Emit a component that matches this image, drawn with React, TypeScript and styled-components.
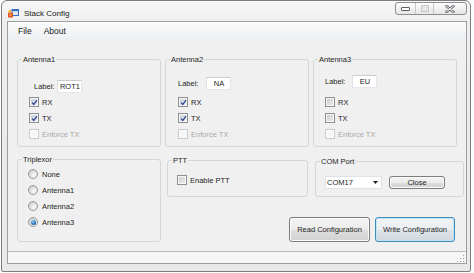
import React from "react";
import styled, { createGlobalStyle } from "styled-components";

const Global = createGlobalStyle`
  html, body { margin: 0; padding: 0; background: #ffffff; }
  body { font-family: "Liberation Sans", Arial, sans-serif; }
  * { box-sizing: border-box; }
`;

const FONT = `"Liberation Sans", Arial, sans-serif`;

const Window = styled.div`
  margin-left: 1px;
  width: 470px;
  height: 272px;
  border: 1px solid #7b7d80;
  border-radius: 6px 6px 2px 2px;
  padding: 0 3px 7px 5px;
  background: linear-gradient(#f7f7f7, #eeeeee 22px, #e9e9e9);
  display: flex;
  flex-direction: column;
`;

const TitleBar = styled.div`
  height: 20px;
  flex-shrink: 0;
  display: flex;
  align-items: flex-start;
`;

const Caption = styled.div`
  display: flex;
  align-items: center;
  gap: 5px;
  height: 14px;
  margin-top: 5px;
  padding-left: 1px;
  font-size: 8px;
  color: #1a1a1a;
`;

const CaptionButtons = styled.div`
  margin-left: auto;
  margin-top: 1px;
  display: flex;
  height: 13px;
  border: 1px solid #8c8e91;
  border-radius: 3px;
  background: linear-gradient(#fefefe, #f1f1f1 50%, #e6e6e6);
  overflow: hidden;
`;

const CaptionButton = styled.div<{ $w: number; $last?: boolean }>`
  width: ${(p) => p.$w}px;
  display: flex;
  align-items: center;
  justify-content: center;
  border-right: ${(p) => (p.$last ? "none" : "1px solid #c4c6c9")};
`;

const Client = styled.div`
  flex: 1;
  border: 1px solid #9b9ea2;
  background: #f0f0f0;
  display: flex;
  flex-direction: column;
`;

const MenuBar = styled.div`
  height: 18px;
  flex-shrink: 0;
  display: flex;
  align-items: center;
  padding-left: 4px;
  background: linear-gradient(#fcfcfd, #f3f4f6 60%, #eceef1);
  font-size: 8.5px;
  color: #1a1a1a;
`;

const MenuItem = styled.span`
  padding: 0 6px;
`;

const Content = styled.div`
  height: 211px;
  flex-shrink: 0;
  display: flex;
  flex-direction: column;
`;

const TopRow = styled.div`
  display: flex;
  gap: 4px;
  padding-left: 9px;
  margin-top: 13px;
`;

const BottomArea = styled.div`
  display: flex;
  align-items: flex-start;
  margin-top: 6px;
  padding-left: 9px;
`;

const RightColumn = styled.div`
  display: flex;
  flex-direction: column;
  margin-left: 6px;
  width: 297px;
`;

const FieldRow = styled.div`
  display: flex;
  align-items: flex-start;
`;

const GroupBox = styled.fieldset<{ $w: number; $h: number; $mt?: number; $ml?: number }>`
  margin: ${(p) => p.$mt ?? 0}px 0 0 ${(p) => p.$ml ?? 0}px;
  width: ${(p) => p.$w}px;
  height: ${(p) => p.$h}px;
  min-width: 0;
  border: 1px solid #d2d7db;
  border-radius: 3px;
  padding: 0 0 0 4px;
`;

const Legend = styled.legend`
  padding: 0 1px;
  font-size: 7.5px;
  line-height: 13px;
  color: #1e1e1e;
`;

const Body = styled.div<{ $pad: number; $top?: number }>`
  padding-left: ${(p) => p.$pad}px;
  padding-top: ${(p) => p.$top ?? 0}px;
  display: flex;
  flex-direction: column;
`;

const LabelArea = styled.div<{ $top: number; $indent: number; $gap: number }>`
  height: 28px;
  padding-top: ${(p) => p.$top}px;
  padding-left: ${(p) => p.$indent}px;
  display: flex;
  align-items: flex-start;
  gap: ${(p) => p.$gap}px;
`;

const LabelText = styled.span`
  font-size: 7.5px;
  line-height: 13px;
  color: #1e1e1e;
`;

const TextBox = styled.input`
  width: 25px;
  height: 13px;
  padding: 0;
  margin: 0;
  border: 1px solid;
  border-color: #c9ccd2 #e3e6ea #e3e6ea #dde0e4;
  background: #ffffff;
  font-family: ${FONT};
  font-size: 7.5px;
  color: #1e1e1e;
  text-align: center;
  outline: none;
`;

const OptionRow = styled.div<{ $disabled?: boolean; $gap: number }>`
  height: 16px;
  display: flex;
  align-items: center;
  gap: ${(p) => p.$gap}px;
  font-size: 7.5px;
  color: ${(p) => (p.$disabled ? "#a9a9a9" : "#1e1e1e")};
`;

const CheckBox = styled.span<{ $checked?: boolean; $disabled?: boolean }>`
  width: 10px;
  height: 10px;
  flex-shrink: 0;
  border: 1px solid ${(p) => (p.$disabled ? "#c9c9c9" : "#8e8f8f")};
  background: ${(p) =>
    p.$disabled
      ? "#f6f6f6"
      : p.$checked
      ? "linear-gradient(135deg, #c4cbd8, #eef1f6)"
      : "linear-gradient(135deg, #c9c9c9, #f0f0f0)"};
  box-shadow: inset 0 0 0 1px ${(p) => (p.$disabled ? "#fcfcfc" : "#f7f7f7")};
  display: flex;
  align-items: center;
  justify-content: center;
`;

const RadioCircle = styled.span`
  width: 10px;
  height: 10px;
  flex-shrink: 0;
  border-radius: 50%;
  border: 1px solid #9a9a9a;
  background: radial-gradient(circle at 62% 68%, #fafafa 0%, #e4e4e4 45%, #c4c4c4 100%);
  display: flex;
  align-items: center;
  justify-content: center;
`;

const RadioDot = styled.span`
  width: 5px;
  height: 5px;
  border-radius: 50%;
  background: radial-gradient(circle at 40% 35%, #9ad8f8 0%, #2a74bd 55%, #0f3e78 100%);
`;

const ComboBox = styled.div`
  width: 57px;
  height: 13px;
  background: #ffffff;
  border: 1px solid #dfe2e6;
  display: flex;
  align-items: center;
  justify-content: space-between;
  padding: 0 3px 0 1px;
  font-size: 7.5px;
  color: #1e1e1e;
`;

const ComRow = styled.div`
  display: flex;
  align-items: center;
  gap: 7px;
`;

const PushButton = styled.button<{ $w: number; $h: number; $default?: boolean }>`
  width: ${(p) => p.$w}px;
  height: ${(p) => p.$h}px;
  padding: 0;
  margin: 0;
  font-family: ${FONT};
  font-size: 7.5px;
  color: #1e1e1e;
  border: 1px solid ${(p) => (p.$default ? "#3f8cbd" : "#7d7d7d")};
  border-radius: 3px;
  background: ${(p) =>
    p.$default
      ? "linear-gradient(#f1f4f6 0%, #eaeef1 50%, #dde3e7 51%, #d2d9de 100%)"
      : "linear-gradient(#f3f3f3 0%, #ececec 50%, #dedede 51%, #d1d1d1 100%)"};
  box-shadow: inset 0 0 0 1px ${(p) => (p.$default ? "#bfe4f6" : "#fbfbfb")};
`;

const ButtonRow = styled.div`
  display: flex;
  justify-content: flex-end;
  gap: 5px;
  padding-right: 9px;
  margin-top: 20px;
`;

const StatusStrip = styled.div`
  flex: 1;
  border-top: 1px solid #b9bbbe;
  background: #f6f6f6;
  display: flex;
  justify-content: flex-end;
  align-items: flex-end;
  padding: 0 1px 0 0;
`;

function CheckMark() {
  return (
    <svg width="7" height="7" viewBox="0 0 7 7">
      <path d="M1 3.6 L2.8 5.5 L6 1.2" fill="none" stroke="#30468f" strokeWidth="1.3" />
    </svg>
  );
}

function Check({ label, checked, disabled }: { label: string; checked?: boolean; disabled?: boolean }) {
  return (
    <OptionRow $disabled={disabled} $gap={3}>
      <CheckBox $checked={checked} $disabled={disabled}>
        {checked && <CheckMark />}
      </CheckBox>
      {label}
    </OptionRow>
  );
}

function Radio({ label, on }: { label: string; on?: boolean }) {
  return (
    <OptionRow $gap={4}>
      <RadioCircle>{on && <RadioDot />}</RadioCircle>
      {label}
    </OptionRow>
  );
}

function AppIcon() {
  return (
    <svg width="11" height="9" viewBox="0 0 11 9">
      <rect x="4" y="0.5" width="6.5" height="6" fill="#dfe9f7" stroke="#3a6cc0" strokeWidth="1" />
      <rect x="4" y="0.5" width="6.5" height="1.6" fill="#3a6cc0" />
      <rect x="0" y="3.5" width="5" height="5" fill="#e2542a" />
      <rect x="0.5" y="1" width="2.6" height="2.5" fill="#f2bb3a" />
      <rect x="1.2" y="4.6" width="2.4" height="2.4" fill="#f58b4a" />
    </svg>
  );
}

function Grip() {
  const dots = [
    [6, 0],
    [6, 3],
    [3, 3],
    [6, 6],
    [3, 6],
    [0, 6],
  ];
  return (
    <svg width="8" height="8" viewBox="0 0 8 8">
      {dots.map(([x, y], i) => (
        <g key={i}>
          <rect x={x + 0.6} y={y + 0.6} width="1.2" height="1.2" fill="#ffffff" />
          <rect x={x} y={y} width="1.2" height="1.2" fill="#a3a6aa" />
        </g>
      ))}
    </svg>
  );
}

const antennas = [
  { name: "Antenna1", label: "ROT1", rx: true, tx: true, pad: 7, indent: 5, gap: 3, top: 14 },
  { name: "Antenna2", label: "NA", rx: true, tx: true, pad: 8, indent: 0, gap: 8, top: 11 },
  { name: "Antenna3", label: "EU", rx: false, tx: false, pad: 7, indent: 0, gap: 7, top: 9 },
];

export default function App() {
  return (
    <>
      <Global />
      <Window>
        <TitleBar>
          <Caption>
            <AppIcon />
            Stack Config
          </Caption>
          <CaptionButtons>
            <CaptionButton $w={20}>
              <svg width="9" height="4" viewBox="0 0 9 4">
                <rect x="0.5" y="0.5" width="8" height="3" fill="#ffffff" stroke="#5a5d62" strokeWidth="1" rx="0.5" />
              </svg>
            </CaptionButton>
            <CaptionButton $w={18}>
              <svg width="8" height="7" viewBox="0 0 8 7">
                <rect x="0.5" y="0.5" width="7" height="6" fill="#f4f4f4" stroke="#c2c4c7" strokeWidth="1" />
                <rect x="2" y="2.2" width="4" height="2.8" fill="none" stroke="#d3d5d8" strokeWidth="0.8" />
              </svg>
            </CaptionButton>
            <CaptionButton $w={32} $last>
              <svg width="10" height="8" viewBox="0 0 10 8">
                <path d="M1.5 1 L8.5 7 M8.5 1 L1.5 7" stroke="#6a6d72" strokeWidth="2.6" strokeLinecap="round" />
                <path d="M1.5 1 L8.5 7 M8.5 1 L1.5 7" stroke="#f4f4f4" strokeWidth="1" strokeLinecap="round" />
              </svg>
            </CaptionButton>
          </CaptionButtons>
        </TitleBar>
        <Client>
          <MenuBar>
            <MenuItem>File</MenuItem>
            <MenuItem>About</MenuItem>
          </MenuBar>
          <Content>
            <TopRow>
              {antennas.map((a) => (
                <GroupBox key={a.name} $w={144} $h={94}>
                  <Legend>{a.name}</Legend>
                  <Body $pad={a.pad}>
                    <LabelArea $top={a.top} $indent={a.indent} $gap={a.gap}>
                      <LabelText>Label:</LabelText>
                      <TextBox readOnly value={a.label} />
                    </LabelArea>
                    <Check label="RX" checked={a.rx} />
                    <Check label="TX" checked={a.tx} />
                    <Check label="Enforce TX" disabled />
                  </Body>
                </GroupBox>
              ))}
            </TopRow>
            <BottomArea>
              <GroupBox $w={144} $h={89}>
                <Legend>Triplexor</Legend>
                <Body $pad={6}>
                  <Radio label="None" />
                  <Radio label="Antenna1" />
                  <Radio label="Antenna2" />
                  <Radio label="Antenna3" on />
                </Body>
              </GroupBox>
              <RightColumn>
                <FieldRow>
                  <GroupBox $w={141} $h={43} $mt={1}>
                    <Legend>PTT</Legend>
                    <Body $pad={5} $top={5}>
                      <Check label="Enable PTT" />
                    </Body>
                  </GroupBox>
                  <GroupBox $w={149} $h={42} $mt={2} $ml={7}>
                    <Legend>COM Port</Legend>
                    <Body $pad={5} $top={8}>
                      <ComRow>
                        <ComboBox>
                          COM17
                          <svg width="5" height="3" viewBox="0 0 5 3">
                            <path d="M0 0 H5 L2.5 3 Z" fill="#1e1e1e" />
                          </svg>
                        </ComboBox>
                        <PushButton $w={56} $h={13}>Close</PushButton>
                      </ComRow>
                    </Body>
                  </GroupBox>
                </FieldRow>
                <ButtonRow>
                  <PushButton $w={81} $h={25}>Read Configuration</PushButton>
                  <PushButton $w={80} $h={25} $default>
                    Write Configuration
                  </PushButton>
                </ButtonRow>
              </RightColumn>
            </BottomArea>
          </Content>
          <StatusStrip>
            <Grip />
          </StatusStrip>
        </Client>
      </Window>
    </>
  );
}
